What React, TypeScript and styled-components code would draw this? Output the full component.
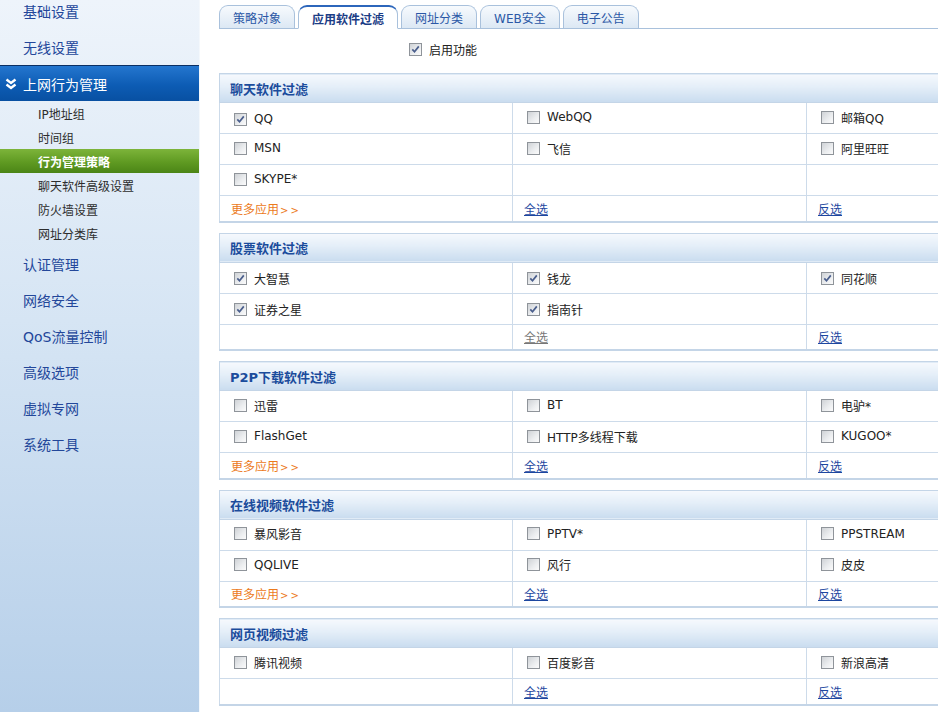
import React from "react";
import styled, { createGlobalStyle } from "styled-components";

const GlobalStyle = createGlobalStyle`
  html, body {
    margin: 0;
    padding: 0;
    overflow: hidden;
    background: #fff;
    font-family: "DejaVu Sans", "Noto Sans CJK SC", sans-serif;
  }
`;

const Page = styled.div`
  display: flex;
  height: 712px;
  width: 938px;
  overflow: hidden;
`;

/* ---------- sidebar ---------- */

const Sidebar = styled.nav`
  flex: 0 0 199px;
  height: 100%;
  background: linear-gradient(180deg, #eef4fb 0%, #d6e5f4 45%, #b6cfe9 100%);
  border-right: 1px solid #f4f8fc;
  overflow: hidden;
`;

const MenuList = styled.div`
  margin-top: -7px;
  display: flex;
  flex-direction: column;
`;

const MenuItem = styled.div`
  height: 36px;
  display: flex;
  align-items: center;
  padding-left: 23px;
  font-size: 14px;
  color: #23479a;
`;

const MenuHeader = styled.div`
  height: 35px;
  display: flex;
  align-items: center;
  gap: 6px;
  padding-left: 5px;
  font-size: 14px;
  color: #fff;
  border-top: 1px solid #0b2f63;
  background: linear-gradient(180deg, #2476cf 0%, #0d5cb4 55%, #0850a2 100%);
`;

const SubList = styled.div`
  display: flex;
  flex-direction: column;
  padding-bottom: 1px;
`;

const SubItem = styled.div<{ $active?: boolean }>`
  height: 24px;
  display: flex;
  align-items: center;
  padding-left: 38px;
  font-size: 12px;
  color: ${(p) => (p.$active ? "#fff" : "#2d2d2d")};
  font-weight: ${(p) => (p.$active ? "bold" : "normal")};
  background: ${(p) =>
    p.$active ? "linear-gradient(180deg, #7db43a 0%, #5f9a22 55%, #4b8516 100%)" : "transparent"};
`;

const ChevronIcon = () => (
  <svg width="12" height="12" viewBox="0 0 12 12">
    <path d="M1.5 1.5 L6 5 L10.5 1.5" fill="none" stroke="#fff" strokeWidth="2.4" />
    <path d="M1.5 6.5 L6 10 L10.5 6.5" fill="none" stroke="#fff" strokeWidth="2.4" />
  </svg>
);

/* ---------- tabs ---------- */

const Main = styled.main`
  flex: 1;
  padding-left: 19px;
  overflow: hidden;
`;

const TabBar = styled.div`
  height: 28px;
  display: flex;
  align-items: flex-end;
  gap: 3px;
  border-bottom: 1px solid #a9c1dc;
`;

const Tab = styled.div<{ $active?: boolean }>`
  height: ${(p) => (p.$active ? "20px" : "21px")};
  display: flex;
  align-items: center;
  padding: 1px 13px 0;
  font-size: 12px;
  white-space: nowrap;
  border: 1px solid #a9c1dc;
  border-top: ${(p) => (p.$active ? "2px solid #2c66bb" : "1px solid #a9c1dc")};
  border-bottom: ${(p) => (p.$active ? "1px solid #fff" : "none")};
  margin-bottom: ${(p) => (p.$active ? "-1px" : "0")};
  border-radius: 9px 9px 0 0;
  box-sizing: content-box;
  color: ${(p) => (p.$active ? "#1b3d86" : "#2b58a6")};
  font-weight: ${(p) => (p.$active ? "bold" : "normal")};
  background: ${(p) => (p.$active ? "#fff" : "linear-gradient(180deg, #f7fafd 0%, #dce8f4 100%)")};
`;

const EnableRow = styled.div`
  height: 44px;
  display: flex;
  align-items: center;
  padding-left: 187px;
  padding-bottom: 4px;
  box-sizing: border-box;
`;

/* ---------- checkbox ---------- */

const Box = styled.span`
  flex: 0 0 auto;
  width: 11px;
  height: 11px;
  border: 1px solid #8f949a;
  background: linear-gradient(135deg, #cfd2d6 0%, #eceef0 60%, #fbfbfb 100%);
  display: inline-flex;
  align-items: center;
  justify-content: center;
`;

const CheckLabel = styled.label`
  display: inline-flex;
  align-items: center;
  gap: 7px;
  margin-left: 3px;
  font-size: 12px;
  color: #222;
  white-space: nowrap;
`;

const Check = ({ checked, label }: { checked?: boolean; label: string }) => (
  <CheckLabel>
    <Box>
      {checked && (
        <svg width="9" height="9" viewBox="0 0 9 9">
          <path d="M1.3 4.4 L3.5 6.8 L7.8 1.4" fill="none" stroke="#4a5e8c" strokeWidth="1.7" />
        </svg>
      )}
    </Box>
    {label}
  </CheckLabel>
);

/* ---------- filter tables ---------- */

const Section = styled.table`
  width: 881px;
  table-layout: fixed;
  border-collapse: collapse;
  border: 1px solid #c4d5e7;
  border-bottom: 2px solid #c4d5e7;
  margin-bottom: 10px;
`;

const HeadCell = styled.th`
  height: 28px;
  padding: 0 0 0 10px;
  text-align: left;
  font-size: 13px;
  font-weight: bold;
  color: #1b4c9c;
  border-bottom: 1px solid #c4d5e7;
  background: linear-gradient(180deg, #f6f9fd 0%, #e4eef8 45%, #c9dcef 100%);
`;

const ItemCell = styled.td`
  height: 31px;
  padding: 0 0 0 11px;
  border: 1px solid #cddbea;
  box-sizing: border-box;
`;

const LinkCell = styled.td`
  height: 26px;
  padding: 0 0 0 11px;
  border: 1px solid #cddbea;
  box-sizing: border-box;
  font-size: 12px;
`;

const MoreLink = styled.span`
  color: #ec7a1c;
  font-size: 12px;

  small {
    font-size: 10px;
    letter-spacing: 2px;
    margin-left: 1px;
  }
`;

const ActionLink = styled.a<{ $muted?: boolean }>`
  color: ${(p) => (p.$muted ? "#777" : "#1d47a0")};
  text-decoration: underline;
  cursor: pointer;
`;

type Item = { name: string; on?: boolean };

interface Group {
  title: string;
  rows: (Item | null)[][];
  more?: boolean;
  selectMuted?: boolean;
}

const groups: Group[] = [
  {
    title: "聊天软件过滤",
    more: true,
    rows: [
      [{ name: "QQ", on: true }, { name: "WebQQ" }, { name: "邮箱QQ" }],
      [{ name: "MSN" }, { name: "飞信" }, { name: "阿里旺旺" }],
      [{ name: "SKYPE*" }, null, null],
    ],
  },
  {
    title: "股票软件过滤",
    selectMuted: true,
    rows: [
      [{ name: "大智慧", on: true }, { name: "钱龙", on: true }, { name: "同花顺", on: true }],
      [{ name: "证券之星", on: true }, { name: "指南针", on: true }, null],
    ],
  },
  {
    title: "P2P下载软件过滤",
    more: true,
    rows: [
      [{ name: "迅雷" }, { name: "BT" }, { name: "电驴*" }],
      [{ name: "FlashGet" }, { name: "HTTP多线程下载" }, { name: "KUGOO*" }],
    ],
  },
  {
    title: "在线视频软件过滤",
    more: true,
    rows: [
      [{ name: "暴风影音" }, { name: "PPTV*" }, { name: "PPSTREAM" }],
      [{ name: "QQLIVE" }, { name: "风行" }, { name: "皮皮" }],
    ],
  },
  {
    title: "网页视频过滤",
    rows: [[{ name: "腾讯视频" }, { name: "百度影音" }, { name: "新浪高清" }]],
  },
];

const FilterGroup = ({ group }: { group: Group }) => (
  <Section>
    <colgroup>
      <col style={{ width: 293 }} />
      <col style={{ width: 294 }} />
      <col style={{ width: 294 }} />
    </colgroup>
    <thead>
      <tr>
        <HeadCell colSpan={3}>{group.title}</HeadCell>
      </tr>
    </thead>
    <tbody>
      {group.rows.map((row, i) => (
        <tr key={i}>
          {row.map((item, j) => (
            <ItemCell key={j}>{item && <Check checked={item.on} label={item.name} />}</ItemCell>
          ))}
        </tr>
      ))}
      <tr>
        <LinkCell>
          {group.more && (
            <MoreLink>
              更多应用<small>&gt;&gt;</small>
            </MoreLink>
          )}
        </LinkCell>
        <LinkCell>
          <ActionLink $muted={group.selectMuted}>全选</ActionLink>
        </LinkCell>
        <LinkCell>
          <ActionLink>反选</ActionLink>
        </LinkCell>
      </tr>
    </tbody>
  </Section>
);

const tabs = ["策略对象", "应用软件过滤", "网址分类", "WEB安全", "电子公告"];
const subMenu = ["IP地址组", "时间组", "行为管理策略", "聊天软件高级设置", "防火墙设置", "网址分类库"];
const lowerMenu = ["认证管理", "网络安全", "QoS流量控制", "高级选项", "虚拟专网", "系统工具"];

export default function App() {
  return (
    <>
      <GlobalStyle />
      <Page>
        <Sidebar>
          <MenuList>
            <MenuItem>基础设置</MenuItem>
            <MenuItem>无线设置</MenuItem>
            <MenuHeader>
              <ChevronIcon />
              上网行为管理
            </MenuHeader>
            <SubList>
              {subMenu.map((s) => (
                <SubItem key={s} $active={s === "行为管理策略"}>
                  {s}
                </SubItem>
              ))}
            </SubList>
            {lowerMenu.map((m) => (
              <MenuItem key={m}>{m}</MenuItem>
            ))}
          </MenuList>
        </Sidebar>
        <Main>
          <TabBar>
            {tabs.map((t) => (
              <Tab key={t} $active={t === "应用软件过滤"}>
                {t}
              </Tab>
            ))}
          </TabBar>
          <EnableRow>
            <Check checked label="启用功能" />
          </EnableRow>
          {groups.map((g) => (
            <FilterGroup key={g.title} group={g} />
          ))}
        </Main>
      </Page>
    </>
  );
}
